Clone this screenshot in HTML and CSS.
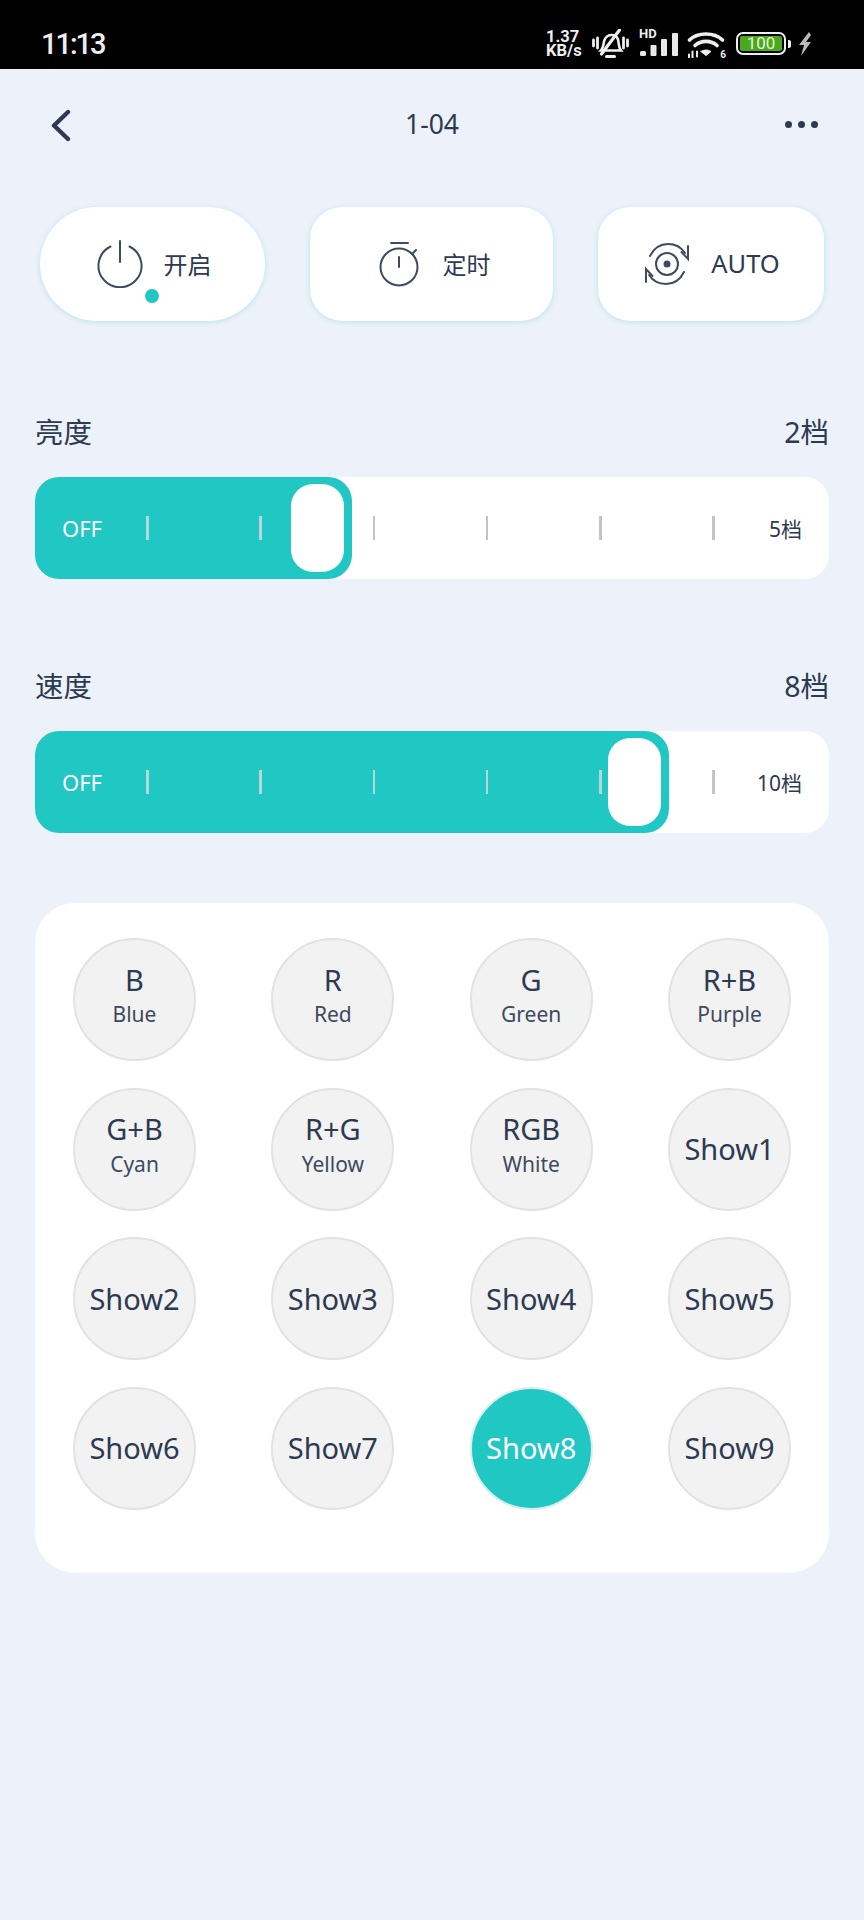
FILE: index.html
```html
<!DOCTYPE html>
<html lang="zh">
<head>
  <meta charset="UTF-8" />
  <meta name="viewport" content="width=device-width, initial-scale=1" />
  <title>1-04</title>
  <link rel="stylesheet" href="styles.css">
</head>
<body>
  <div class="statusbar">
    <span class="clock">11:13</span>
    <div class="status-icons">
      <div class="netspeed"><span>1.37</span><span>KB/s</span></div>
      <!-- muted bell -->
      <svg class="ic-bell" width="37" height="30" viewBox="0 0 37 30" fill="none" stroke="#eee" stroke-width="2.800" stroke-linecap="round">
        <path d="M1.500 11v6M5.500 9v10M31.500 9v10M35.500 11v6"/>
        <path d="M9 21.500c3-3 2-7 3.500-10.500c1.500-3.500 4-5 7-5c3 0 5.500 1.500 6.500 4.500c1 4 .5 8 3 11z" stroke-width="2.600"/>
        <path d="M14.500 27.500h8" stroke-width="3"/>
        <path d="M9.500 25L27.500 1" stroke-width="3.200"/>
      </svg>
      <div class="signal">
        <span class="hd">HD</span>
        <svg width="39" height="23" viewBox="0 0 39 23" fill="#e8e8e8">
          <rect x="0" y="18" width="6" height="5" rx="1.500"/>
          <rect x="10.500" y="12" width="6" height="11" rx="1"/>
          <rect x="21" y="6" width="6" height="17" rx="1"/>
          <rect x="32" y="0" width="6" height="23" rx="1"/>
        </svg>
      </div>
      <div class="wifi">
        <svg width="38" height="28" viewBox="0 0 38 28" fill="none" stroke="#eee" stroke-width="3.600" stroke-linecap="round">
          <path d="M2.500 10C11 2 27 2 35.500 10"/>
          <path d="M8 15.500C14 10 24 10 30 15.500"/>
          <path d="M14 21.500L19 25.500L24 21.500C21 19.500 17 19.500 14 21.500z" fill="#eee" stroke-width="1"/>
          <path d="M2 24.500v3M5.500 21.500v6M10 21.500v5" stroke-width="2"/>
        </svg>
        <span class="wifi-gen">6</span>
      </div>
      <div class="battery">
        <div class="battery-body"><span class="battery-level">100</span></div>
        <span class="battery-nub"></span>
      </div>
      <svg class="bolt" width="14" height="24" viewBox="0 0 14 24" fill="#bbb"><path d="M11 0L1 13h5l-3 11l10-14H8l5-7z"/></svg>
    </div>
  </div>

  <div class="topbar">
    <svg class="back" width="20" height="33" viewBox="0 0 20 33" fill="none" stroke="#2c3a52" stroke-width="4.400" stroke-linecap="round" stroke-linejoin="round">
      <path d="M17 3L3 16.500L17 30"/>
    </svg>
    <span class="title">1-04</span>
    <div class="more"><i></i><i></i><i></i></div>
  </div>

  <div class="actions">
    <div class="action action-power">
      <svg width="46" height="48" viewBox="0 0 46 48" fill="none" stroke="#3d4a5f" stroke-width="2" stroke-linecap="round">
        <path d="M13.500 6.500A21.500 21.500 0 1 0 32.500 6.500"/>
        <path d="M23 1v21"/>
      </svg>
      <span>开启</span>
      <i class="power-dot"></i>
    </div>
    <div class="action action-timer">
      <svg width="44" height="46" viewBox="0 0 44 46" fill="none" stroke="#3d4a5f" stroke-width="2" stroke-linecap="round">
        <circle cx="21" cy="26" r="18.500"/>
        <path d="M13 2h17M21 16v10M34 13l4-4"/>
      </svg>
      <span>定时</span>
    </div>
    <div class="action action-auto">
      <svg width="46" height="44" viewBox="0 0 46 44" fill="none" stroke="#3d4a5f" stroke-width="2" stroke-linecap="round">
        <circle cx="23" cy="22" r="11"/>
        <circle cx="23" cy="22" r="3.500" fill="#3d4a5f" stroke="none"/>
        <path d="M6 14C10 6 17 2 24 2C31 2 37 5 41 11"/>
        <path d="M44 4v13L37.500 10"/>
        <path d="M40 30C36 38 29 42 22 42C15 42 9 39 5 33"/>
        <path d="M2 40V27L8.500 34"/>
      </svg>
      <span>AUTO</span>
    </div>
  </div>

  <section class="level">
    <div class="level-head"><span>亮度</span><span>2档</span></div>
    <div class="track">
      <div class="track-fill" style="width:317px"><div class="thumb"></div></div>
      <div class="track-row">
        <span class="off">OFF</span>
        <div class="ticks">
          <i class="tick on"></i><i class="tick on"></i><i class="tick"></i><i class="tick"></i><i class="tick"></i><i class="tick"></i>
        </div>
        <span class="max">5档</span>
      </div>
    </div>
  </section>

  <section class="level">
    <div class="level-head"><span>速度</span><span>8档</span></div>
    <div class="track">
      <div class="track-fill" style="width:634px"><div class="thumb"></div></div>
      <div class="track-row">
        <span class="off">OFF</span>
        <div class="ticks">
          <i class="tick on"></i><i class="tick on"></i><i class="tick on"></i><i class="tick on"></i><i class="tick on"></i><i class="tick"></i>
        </div>
        <span class="max">10档</span>
      </div>
    </div>
  </section>

  <div class="modes">
    <div class="mode"><b>B</b><small>Blue</small></div>
    <div class="mode"><b>R</b><small>Red</small></div>
    <div class="mode"><b>G</b><small>Green</small></div>
    <div class="mode"><b>R+B</b><small>Purple</small></div>
    <div class="mode"><b>G+B</b><small>Cyan</small></div>
    <div class="mode"><b>R+G</b><small>Yellow</small></div>
    <div class="mode"><b>RGB</b><small>White</small></div>
    <div class="mode"><b>Show1</b></div>
    <div class="mode"><b>Show2</b></div>
    <div class="mode"><b>Show3</b></div>
    <div class="mode"><b>Show4</b></div>
    <div class="mode"><b>Show5</b></div>
    <div class="mode"><b>Show6</b></div>
    <div class="mode"><b>Show7</b></div>
    <div class="mode active"><b>Show8</b></div>
    <div class="mode"><b>Show9</b></div>
  </div>
</body>
</html>
```

FILE: styles.css
```css
body {
  margin: 0;
  height: 1920px;
  overflow: hidden;
  background-color: #ecf1fa;
  color: #2c3a52;
  font-family: "Noto Sans", "Noto Sans CJK SC", sans-serif;
}

/* status bar */
.statusbar {
  height: 69px;
  background: #000;
  color: #eee;
  display: flex;
  align-items: center;
  justify-content: space-between;
  padding: 18px 52px 0 41px;
  box-sizing: border-box;
}
.clock {
  font-family: Roboto, sans-serif;
  font-size: 29px;
  font-weight: 500;
  letter-spacing: -2px;
}
.status-icons {
  display: flex;
  align-items: center;
  gap: 8px;
}
.netspeed {
  display: flex;
  flex-direction: column;
  font-family: Roboto, sans-serif;
  font-size: 16.500px;
  font-weight: 700;
  line-height: 14px;
  width: 38px;
}
.signal {
  position: relative;
  width: 42px;
  height: 28px;
  display: flex;
  align-items: flex-end;
  justify-content: flex-end;
}
.signal svg {
  margin-bottom: 2px;
}
.hd {
  position: absolute;
  left: 2px;
  top: -3px;
  font-family: Roboto, sans-serif;
  font-size: 13px;
  font-weight: 700;
  line-height: 14px;
}
.wifi {
  position: relative;
  height: 28px;
}
.wifi-gen {
  position: absolute;
  right: -1px;
  bottom: -2px;
  font-family: Roboto, sans-serif;
  font-size: 10px;
  font-weight: 700;
}
.battery {
  display: flex;
  align-items: center;
  gap: 2px;
  margin-left: 3px;
}
.battery-body {
  width: 50px;
  height: 23px;
  box-sizing: border-box;
  border: 2.500px solid #eee;
  border-radius: 7px;
  padding: 2px;
  display: flex;
}
.battery-level {
  flex: 1;
  background: #4aa81c;
  border-radius: 2px;
  color: #e8f5dc;
  font-family: Roboto, sans-serif;
  font-size: 17px;
  line-height: 15px;
  text-align: center;
}
.battery-nub {
  width: 3px;
  height: 8px;
  background: #eee;
  border-radius: 0 2px 2px 0;
}
.bolt {
  margin-left: -1px;
}

/* title row */
.topbar {
  height: 112px;
  padding: 0 46px;
  display: grid;
  grid-template-columns: 1fr auto 1fr;
  align-items: center;
}
.back {
  margin-left: 5px;
}
.title {
  font-size: 26.500px;
  margin-bottom: 2px;
}
.more {
  display: flex;
  gap: 6px;
  margin-bottom: 2px;
  justify-self: end;
}
.more i {
  width: 7px;
  height: 7px;
  border-radius: 50%;
  background: #2c3a52;
}

/* power / timer / auto */
.actions {
  display: flex;
  justify-content: space-between;
  padding: 0 40px;
  margin-top: 26px;
}
.action {
  height: 114px;
  box-sizing: border-box;
  background: white;
  border-radius: 32px;
  box-shadow: 0 1px 5px rgba(32, 200, 194, 0.28);
  display: flex;
  align-items: center;
  justify-content: center;
  gap: 21px;
  font-size: 24px;
  position: relative;
}
.action span {
  margin-bottom: 2px;
}
.action-power {
  width: 225px;
  border-radius: 57px;
  padding-left: 3px;
}
.action-timer {
  width: 243px;
  padding-left: 5px;
}
.action-auto {
  width: 226px;
  font-size: 25.500px;
  padding-left: 2px;
}
.power-dot {
  position: absolute;
  left: 105px;
  top: 82px;
  width: 14px;
  height: 14px;
  border-radius: 50%;
  background: #21c7c3;
}

/* level sliders */
.level {
  padding: 0 35px;
  margin-top: 85px;
}
.actions + .level {
  margin-top: 89px;
}
.level-head {
  display: flex;
  justify-content: space-between;
  align-items: center;
  font-size: 28.500px;
  height: 40px;
  margin-bottom: 27px;
}
.track {
  height: 102px;
  background: white;
  border-radius: 24px;
  position: relative;
}
.track-fill {
  position: absolute;
  left: 0;
  top: 0;
  bottom: 0;
  background: #21c7c3;
  border-radius: 24px;
  display: flex;
  justify-content: flex-end;
  padding: 7px 8.500px;
  box-sizing: border-box;
}
.thumb {
  width: 53px;
  background: white;
  border-radius: 22px;
}
.track-row {
  position: relative;
  height: 100%;
  display: flex;
  align-items: center;
  padding: 0 27px;
  pointer-events: none;
}
.off {
  width: 84px;
  font-size: 22px;
  color: white;
}
.ticks {
  width: 569px;
  display: flex;
  justify-content: space-between;
}
.tick {
  width: 2.500px;
  height: 24px;
  background: #c4c4c4;
}
.tick.on {
  background: #b4d8d8;
}
.max {
  margin-left: auto;
  font-size: 21px;
}

/* colour and show buttons */
.modes {
  margin: 70px 35px 0;
  height: 670px;
  box-sizing: border-box;
  background: white;
  border-radius: 40px;
  padding: 35px 38px;
  display: grid;
  grid-template-columns: repeat(4, 123px);
  grid-auto-rows: 123px;
  justify-content: space-between;
  row-gap: 26.500px;
}
.mode {
  border-radius: 50%;
  background: #f2f2f2;
  border: 2px solid #e2e2e2;
  box-sizing: border-box;
  display: flex;
  flex-direction: column;
  align-items: center;
  justify-content: center;
}
.mode b {
  font-weight: 400;
  font-size: 29px;
  line-height: 36px;
}
.mode small {
  font-size: 21px;
  line-height: 28px;
  margin: 2.500px 0 9.500px;
  color: #3d4a5f;
}
.mode.active {
  background: #21c7c3;
  border-color: #d8efee;
  color: white;
}
```
